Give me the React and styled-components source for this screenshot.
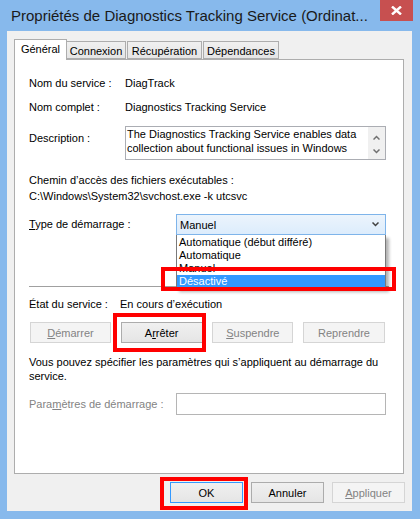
import React from "react";
import styled, { createGlobalStyle } from "styled-components";

const Global = createGlobalStyle`
  html, body { margin: 0; padding: 0; }
  body {
    font-family: "Liberation Sans", Arial, sans-serif;
    font-size: 11px;
    color: #000;
  }
`;

const Window = styled.div`
  position: relative;
  width: 420px;
  height: 519px;
  background: #87b9ec;
  display: flex;
  flex-direction: column;
  overflow: hidden;
`;

const TitleBar = styled.div`
  height: 31px;
  flex: none;
  display: flex;
  align-items: flex-start;
`;

const Title = styled.div`
  padding: 7px 0 0 11px;
  font-size: 15px;
  line-height: 17px;
  color: #1a1a1a;
  white-space: nowrap;
`;

const CloseButton = styled.div`
  margin-left: auto;
  margin-right: 7px;
  width: 33px;
  height: 21px;
  background: #c75050;
  display: flex;
  align-items: center;
  justify-content: center;
`;

const Client = styled.div`
  flex: 1;
  margin: 0 8px 8px 7px;
  background: #f0f0f0;
  padding: 8px 8px 0 7px;
  display: flex;
  flex-direction: column;
`;

const TabStrip = styled.div`
  height: 20px;
  display: flex;
  align-items: flex-end;
  position: relative;
  z-index: 2;
`;

const Tab = styled.div`
  box-sizing: border-box;
  width: ${(p) => p.$w}px;
  height: ${(p) => (p.$active ? 21 : 18)}px;
  margin-bottom: ${(p) => (p.$active ? -1 : 0)}px;
  margin-left: ${(p) => p.$ml || 0}px;
  border: 1px solid #adadad;
  border-bottom: ${(p) => (p.$active ? "none" : "1px solid #adadad")};
  background: ${(p) => (p.$active ? "#fff" : "linear-gradient(#f0f0f0, #e5e5e5)")};
  display: flex;
  align-items: center;
  justify-content: center;
  padding-top: ${(p) => (p.$active ? 0 : 1)}px;
  padding-bottom: ${(p) => (p.$active ? 2 : 0)}px;
  white-space: nowrap;
`;

const Panel = styled.div`
  box-sizing: border-box;
  height: 415px;
  flex: none;
  border: 1px solid #adadad;
  background: #fff;
  padding: 0 0 0 14px;
  display: flex;
  flex-direction: column;
  position: relative;
  z-index: 1;
`;

const Row = styled.div`
  display: flex;
  align-items: ${(p) => p.$align || "center"};
  margin-top: ${(p) => p.$mt || 0}px;
`;

const Label = styled.div`
  width: ${(p) => p.$w}px;
  flex: none;
  line-height: 15px;
  padding-top: ${(p) => p.$pt || 0}px;
  color: ${(p) => (p.$disabled ? "#838383" : "#000")};
  white-space: nowrap;
`;

const Value = styled.div`
  line-height: 15px;
  white-space: nowrap;
`;

const TextArea = styled.div`
  box-sizing: border-box;
  width: 261px;
  height: 34px;
  border: 1px solid #abadb3;
  background: #fff;
  display: flex;
`;

const TextBody = styled.div`
  flex: 1;
  padding-left: 1px;
  line-height: 14px;
  white-space: nowrap;
`;

const ScrollBar = styled.div`
  width: 17px;
  flex: none;
  background: #f0f0f0;
  display: flex;
  flex-direction: column;
  align-items: center;
  justify-content: space-between;
  padding: 8px 0 5px;
  box-sizing: border-box;
`;

const Block = styled.div`
  margin-top: ${(p) => p.$mt || 0}px;
  line-height: ${(p) => p.$lh || 15}px;
  white-space: nowrap;
`;

const ComboWrap = styled.div`
  position: relative;
  width: 210px;
  flex: none;
`;

const Combo = styled.div`
  box-sizing: border-box;
  height: 21px;
  border: 1px solid #7eb4ea;
  background: linear-gradient(#ecf4fc, #dcecfc);
  display: flex;
  align-items: center;
  padding: 0 6px 0 3px;
  justify-content: space-between;
`;

const DropList = styled.div`
  position: absolute;
  left: 0;
  top: 100%;
  width: 100%;
  box-sizing: border-box;
  border: 1px solid #7a7a7a;
  border-top: none;
  background: #fff;
  padding-top: 1px;
  box-shadow: 3px 3px 3px rgba(0, 0, 0, 0.3);
  z-index: 5;
`;

const DropItem = styled.div`
  height: 13px;
  line-height: 13px;
  padding-left: 2px;
  background: ${(p) => (p.$selected ? "#3399ff" : "transparent")};
  color: ${(p) => (p.$selected ? "#fff" : "#000")};
  white-space: nowrap;
`;

const Separator = styled.div`
  height: 1px;
  background: #a0a0a0;
  margin: ${(p) => p.$mt}px 14px 0 0;
`;

const ButtonRow = styled.div`
  display: flex;
  justify-content: space-between;
  margin: ${(p) => p.$mt}px 18px 0 1px;
`;

const Button = styled.div`
  box-sizing: border-box;
  width: ${(p) => p.$w}px;
  height: 21px;
  border: 1px solid
    ${(p) => (p.$default ? "#3399ff" : p.$disabled ? "#d5d5d5" : "#acacac")};
  background: ${(p) =>
    p.$disabled ? "#f4f4f4" : "linear-gradient(#f0f0f0, #e5e5e5)"};
  color: ${(p) => (p.$disabled ? "#838383" : "#000")};
  display: flex;
  align-items: center;
  justify-content: center;
  white-space: nowrap;
`;

const U = styled.span`
  text-decoration: underline;
`;

const Input = styled.div`
  box-sizing: border-box;
  width: 210px;
  height: 22px;
  border: 1px solid #b5b5b5;
  background: #fff;
`;

const Footer = styled.div`
  display: flex;
  justify-content: flex-end;
  gap: 8px;
  margin: 8px -1px 0 0;
`;

const Annotation = styled.div`
  position: absolute;
  left: ${(p) => p.$x}px;
  top: ${(p) => p.$y}px;
  width: ${(p) => p.$w}px;
  height: ${(p) => p.$h}px;
  box-sizing: border-box;
  border: 4px solid #ff0000;
  z-index: 10;
  pointer-events: none;
`;

const Chevron = ({ up, color = "#707070" }) => (
  <svg width="7" height="5" viewBox="0 0 7 5">
    <path
      d={up ? "M0.5 4.5 L3.5 1.5 L6.5 4.5" : "M0.5 0.5 L3.5 3.5 L6.5 0.5"}
      fill="none"
      stroke={color}
      strokeWidth="1.5"
    />
  </svg>
);

export default function App() {
  return (
    <>
      <Global />
      <Window>
        <TitleBar>
          <Title>Propriétés de Diagnostics Tracking Service (Ordinat...</Title>
          <CloseButton>
            <svg width="11" height="9" viewBox="0 0 11 9">
              <path d="M1 0.5 L10 8.5 M10 0.5 L1 8.5" stroke="#fff" strokeWidth="2.4" />
            </svg>
          </CloseButton>
        </TitleBar>
        <Client>
          <TabStrip>
            <Tab $active $w={53}>Général</Tab>
            <Tab $w={60} $ml={-1}>Connexion</Tab>
            <Tab $w={75} $ml={1}>Récupération</Tab>
            <Tab $w={76} $ml={1}>Dépendances</Tab>
          </TabStrip>
          <Panel>
            <Row $mt={16}>
              <Label $w={96}>Nom du service :</Label>
              <Value>DiagTrack</Value>
            </Row>
            <Row $mt={9}>
              <Label $w={96}>Nom complet :</Label>
              <Value>Diagnostics Tracking Service</Value>
            </Row>
            <Row $mt={11} $align="flex-start">
              <Label $w={96} $pt={5}>Description :</Label>
              <TextArea>
                <TextBody>
                  The Diagnostics Tracking Service enables data
                  <br />
                  collection about functional issues in Windows
                </TextBody>
                <ScrollBar>
                  <Chevron up />
                  <Chevron />
                </ScrollBar>
              </TextArea>
            </Row>
            <Block $mt={12} $lh={16}>
              Chemin d’accès des fichiers exécutables :
            </Block>
            <Block $lh={16}>C:\Windows\System32\svchost.exe -k utcsvc</Block>
            <Row $mt={10}>
              <Label $w={147}>
                <U>T</U>ype de démarrage :
              </Label>
              <ComboWrap>
                <Combo>
                  <span>Manuel</span>
                  <Chevron color="#404040" />
                </Combo>
                <DropList>
                  <DropItem>Automatique (début différé)</DropItem>
                  <DropItem>Automatique</DropItem>
                  <DropItem>Manuel</DropItem>
                  <DropItem $selected>Désactivé</DropItem>
                </DropList>
              </ComboWrap>
            </Row>
            <Separator $mt={51} />
            <Row $mt={10}>
              <Label $w={91}>État du service :</Label>
              <Value>En cours d’exécution</Value>
            </Row>
            <ButtonRow $mt={10}>
              <Button $w={81} $disabled>
                <U>D</U>émarrer
              </Button>
              <Button $w={82}>
                A<U>r</U>rêter
              </Button>
              <Button $w={81} $disabled>
                <U>S</U>uspendre
              </Button>
              <Button $w={82} $disabled>
                Reprendre
              </Button>
            </ButtonRow>
            <Block $mt={12} $lh={14}>
              Vous pouvez spécifier les paramètres qui s’appliquent au démarrage du
            </Block>
            <Block $lh={14}>service.</Block>
            <Row $mt={10}>
              <Label $w={147} $disabled>
                Para<U>m</U>ètres de démarrage :
              </Label>
              <Input />
            </Row>
          </Panel>
          <Footer>
            <Button $w={73} $default>OK</Button>
            <Button $w={73}>Annuler</Button>
            <Button $w={73} $disabled>
              <U>A</U>ppliquer
            </Button>
          </Footer>
        </Client>
        <Annotation $x={161} $y={267} $w={235} $h={24} />
        <Annotation $x={113} $y={313} $w={93} $h={39} />
        <Annotation $x={160} $y={477} $w={88} $h={33} />
      </Window>
    </>
  );
}
